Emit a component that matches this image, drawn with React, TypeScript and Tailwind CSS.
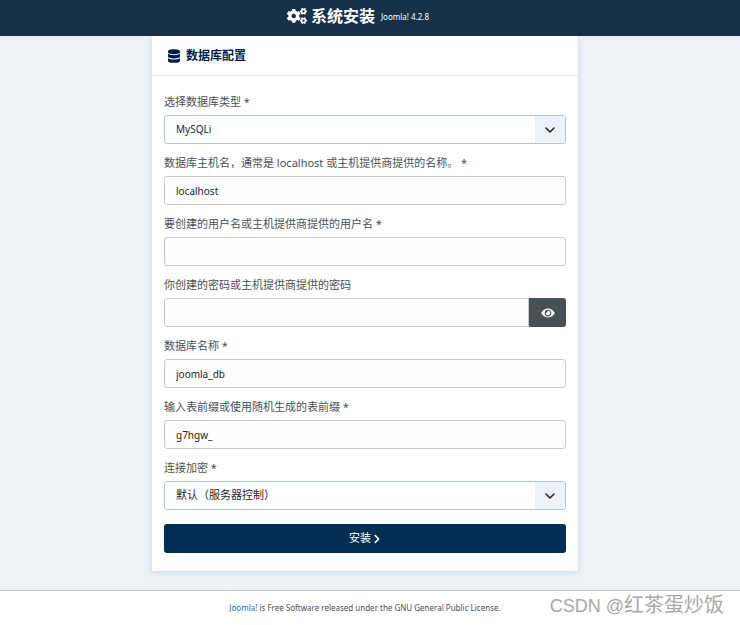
import { useState } from 'react';
import type { ReactNode } from 'react';
import { FaChevronRight, FaCogs, FaDatabase, FaEye, FaEyeSlash } from 'react-icons/fa';

const inputClass =
  'block h-[29px] w-full min-w-0 rounded-[3px] border border-[#c8cacd] bg-[#fdfdfd] px-[11px] text-[10px] text-[#22262a] outline-none focus:border-[#8894aa]';

const App = () => {
  const [showPassword, setShowPassword] = useState(false);

  return (
    <div className="relative flex min-h-screen flex-col bg-[#edf2fa] font-['Noto_Sans','Noto_Sans_CJK_SC',sans-serif] text-[#495057]">
      <header className="flex h-9 items-center justify-center bg-[#183148] pr-6 pb-1 text-white">
        <FaCogs className="mr-1 h-5 w-5" />
        <h1 className="text-base leading-8 font-bold">系统安装</h1>
        <span className="ml-1.5 pt-0.5 text-[8px]">Joomla! 4.2.8</span>
      </header>

      <main className="flex flex-1 justify-center pr-[26px] pb-[19px] pl-4">
        <section className="w-full max-w-[426px] bg-white shadow-[0_1px_6px_rgba(30,50,90,0.15)]">
          <h2 className="flex h-10 items-center gap-1.5 border-b border-[#e9ebee] px-4 text-xs font-bold text-[#001b4c]">
            <FaDatabase className="h-3.5 w-3" />
            数据库配置
          </h2>

          <form className="px-3 py-[18px]" onSubmit={(e) => e.preventDefault()}>
            <div className="flex flex-col gap-[11px]">
              <Field id="db_type" label="选择数据库类型 *">
                <Select id="db_type" options={['MySQLi', 'MySQL (PDO)']} className="text-[10px]" />
              </Field>
              <Field id="db_host" label="数据库主机名，通常是 localhost 或主机提供商提供的名称。 *">
                <input id="db_host" type="text" defaultValue="localhost" className={inputClass} />
              </Field>
              <Field id="db_user" label="要创建的用户名或主机提供商提供的用户名 *">
                <input id="db_user" type="text" className={inputClass} />
              </Field>
              <Field id="db_pass" label="你创建的密码或主机提供商提供的密码">
                <div className="flex">
                  <input
                    id="db_pass"
                    type={showPassword ? 'text' : 'password'}
                    className={`${inputClass} rounded-r-none`}
                  />
                  <button
                    type="button"
                    aria-label="显示密码"
                    onClick={() => setShowPassword(!showPassword)}
                    className="flex w-[37px] shrink-0 items-center justify-center rounded-r-[3px] bg-[#495057] text-white"
                  >
                    {showPassword ? <FaEyeSlash className="h-3 w-3.5" /> : <FaEye className="h-3 w-3.5" />}
                  </button>
                </div>
              </Field>
              <Field id="db_name" label="数据库名称 *">
                <input id="db_name" type="text" defaultValue="joomla_db" className={inputClass} />
              </Field>
              <Field id="db_prefix" label="输入表前缀或使用随机生成的表前缀 *">
                <input id="db_prefix" type="text" defaultValue="g7hgw_" className={inputClass} />
              </Field>
              <Field id="db_encryption" label="连接加密 *">
                <Select
                  id="db_encryption"
                  options={['默认（服务器控制）', '单向认证', '双向认证']}
                  className="text-[11px]"
                />
              </Field>
            </div>

            <button
              type="submit"
              className="mt-3.5 flex h-[29px] w-full items-center justify-center gap-0.5 rounded-[3px] bg-[#002f53] text-[11px] text-white hover:bg-[#00406f]"
            >
              安装
              <FaChevronRight className="h-2.5 w-2" />
            </button>
          </form>
        </section>
      </main>

      <footer className="flex h-[35px] items-center justify-center border-t border-[#bfc4d0] bg-white px-4 text-[8px]">
        <p className="pr-2.5">
          <a href="#" className="text-[#0b73c5]">Joomla!</a> is Free Software released under the GNU General Public License.
        </p>
      </footer>

      <span className="absolute right-4 bottom-1 font-['Liberation_Sans','Noto_Sans_CJK_SC',sans-serif] text-xl leading-8 text-[#a8a8a8]">
        <span className="text-lg">CSDN @</span>红茶蛋炒饭
      </span>
    </div>
  );
};

const Field = ({ id, label, children }: { id: string; label: string; children: ReactNode }) => (
  <div>
    <label htmlFor={id} className="mb-[5px] block text-[11px] leading-4">
      {label}
    </label>
    {children}
  </div>
);

const Select = ({ id, options, className }: { id: string; options: string[]; className: string }) => (
  <div className="relative">
    <select
      id={id}
      className={`block h-[29px] w-full appearance-none rounded-[3px] border border-[#abc8e0] bg-white px-[11px] text-[#22262a] outline-none ${className}`}
    >
      {options.map((option) => (
        <option key={option}>{option}</option>
      ))}
    </select>
    <span className="pointer-events-none absolute inset-y-px right-px flex w-[30px] items-center justify-center rounded-r-[2px] bg-[#edf2fa] text-[#22262a]">
      <svg className="h-1.5 w-2.5" fill="none" stroke="currentColor" viewBox="0 0 10 6">
        <path strokeLinecap="round" strokeLinejoin="round" strokeWidth={1.6} d="M1 1l4 4 4-4" />
      </svg>
    </span>
  </div>
);

export default App;
